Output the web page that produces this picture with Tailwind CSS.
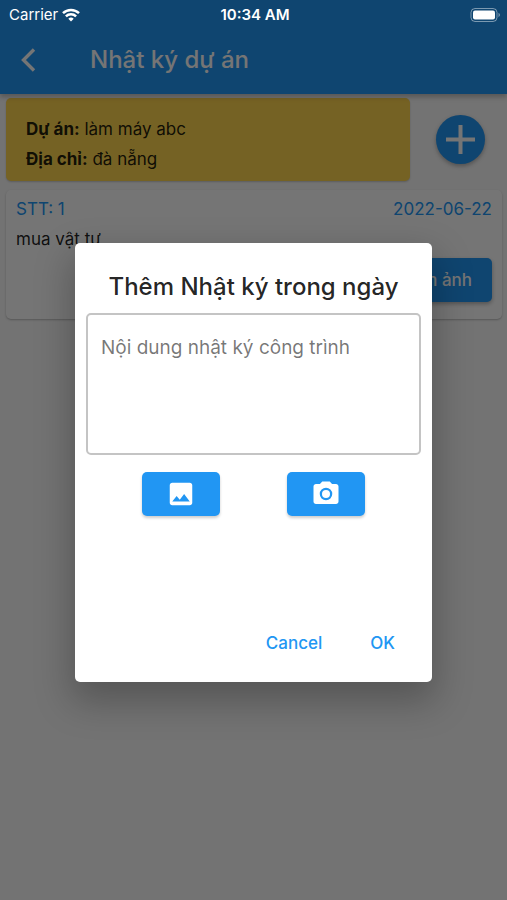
<!DOCTYPE html>
<html lang="vi">
<head>
<meta charset="utf-8">
<meta name="viewport" content="width=device-width, initial-scale=1">
<title>Nhật ký dự án</title>
<script src="https://cdn.jsdelivr.net/npm/@tailwindcss/browser@4"></script>
</head>
<body class="relative min-h-screen bg-[#fafafa] font-['Inter','Noto_Sans',sans-serif] text-[17px] leading-[30px] text-black/87">

<header class="relative bg-[#2196f3] pt-7 shadow-[0_3px_5px_rgba(0,0,0,0.25)]">
  <div class="flex h-[66px] items-center gap-12 px-4 pb-[2px] text-white">
    <button type="button" aria-label="Quay lại" class="flex size-[26px] items-center justify-center">
      <svg class="h-[26px] w-6" viewBox="0 0 24 26" fill="none" stroke="currentColor" stroke-width="3.400"><path d="M17 2.500 6.500 13 17 23.500"/></svg>
    </button>
    <h1 class="text-2xl font-medium">Nhật ký dự án</h1>
  </div>
</header>

<main class="flex flex-col gap-[9px] pt-1 pr-[5px] pl-[6px]">
  <div class="flex items-center">
    <section class="grow rounded-[5px] bg-[#ffd54f] px-5 pt-4 pb-[7px] shadow-[0_1px_2px_rgba(0,0,0,0.2)]">
      <p><b>Dự án:</b> làm máy abc</p>
      <p><b>Địa chỉ:</b> đà nẵng</p>
    </section>
    <div class="flex w-[92px] shrink-0 justify-center pl-2">
      <button type="button" aria-label="Thêm" class="flex size-[49px] items-center justify-center rounded-full bg-[#2196f3] text-white shadow-[0_2px_4px_rgba(0,0,0,0.3)]">
        <svg class="size-[29px]" viewBox="0 0 29 29" fill="none" stroke="currentColor" stroke-width="4"><path d="M14.500 0v29M0 14.500h29"/></svg>
      </button>
    </div>
  </div>
  <article class="rounded-[5px] bg-white px-[10px] pt-1 pb-[17px] shadow-[0_1px_2px_rgba(0,0,0,0.25)]">
    <div class="flex justify-between text-[#2196f3]"><span>STT: 1</span><time datetime="2022-06-22">2022-06-22</time></div>
    <p>mua vật tư</p>
    <div class="mt-1 flex justify-end">
      <button type="button" class="h-11 rounded-[5px] bg-[#2196f3] px-5 font-medium text-white shadow-[0_2px_4px_rgba(0,0,0,0.3)]">Xem ảnh</button>
    </div>
  </article>
</main>

<div class="absolute inset-0 flex items-center justify-center bg-black/54 px-[75px] pt-[25px]">
  <section role="dialog" aria-modal="true" aria-labelledby="dialog-title" class="w-full max-w-md rounded-[5px] bg-white px-[11px] pt-7 pb-4 shadow-[0_16px_36px_4px_rgba(0,0,0,0.25)]">
    <h2 id="dialog-title" class="text-center text-2xl leading-8 font-medium whitespace-nowrap">Thêm Nhật ký trong ngày</h2>
    <form>
      <textarea aria-label="Nội dung nhật ký công trình" placeholder="Nội dung nhật ký công trình" class="mt-[10px] block h-[142px] w-full resize-none rounded-[5px] border-2 border-[#c4c4c4] px-[13px] py-[18px] text-[19px] outline-none placeholder:text-black/54"></textarea>
      <div class="mt-[17px] flex justify-between px-14">
        <button type="button" aria-label="Chọn ảnh" class="flex h-11 w-[78px] items-center justify-center rounded-[5px] bg-[#2196f3] text-white shadow-[0_2px_3px_rgba(0,0,0,0.2)]">
          <svg class="size-[30px]" viewBox="0 0 24 24" fill="currentColor"><path d="M21 19V5c0-1.100-.9-2-2-2H5c-1.100 0-2 .9-2 2v14c0 1.100.9 2 2 2h14c1.100 0 2-.9 2-2zM8.500 13.500l2.500 3.010L14.500 12l4.500 6H5l3.500-4.500z"/></svg>
        </button>
        <button type="button" aria-label="Chụp ảnh" class="flex h-11 w-[78px] items-center justify-center rounded-[5px] bg-[#2196f3] text-white shadow-[0_2px_3px_rgba(0,0,0,0.2)]">
          <svg class="size-[30px]" viewBox="0 0 24 24" fill="currentColor"><path fill-rule="evenodd" d="M9 2L7.170 4H4c-1.100 0-2 .9-2 2v12c0 1.100.9 2 2 2h16c1.100 0 2-.9 2-2V6c0-1.100-.9-2-2-2h-3.170L15 2H9zm3 15a5 5 0 1 1 0-10 5 5 0 0 1 0 10z"/><circle cx="12" cy="12" r="3.200"/></svg>
        </button>
      </div>
      <div class="mt-[104px] flex justify-end gap-4 pr-[10px] font-medium text-[#2196f3]">
        <button type="button" class="h-[46px] px-4">Cancel</button>
        <button type="submit" class="h-[46px] px-4">OK</button>
      </div>
    </form>
  </section>
</div>

<div class="absolute inset-x-0 top-0 grid h-7 grid-cols-3 items-center pr-[6px] pl-[9px] text-[15px] text-white">
  <div class="flex items-center gap-1">Carrier
    <svg class="h-[14px] w-[18px]" viewBox="0 0 18 14" fill="none" stroke="currentColor" stroke-width="2.500"><path d="M1 5.200a11.400 11.400 0 0 1 16 0M3.900 8.300a7.200 7.200 0 0 1 10.200 0"/><path d="M9 13.500 6.300 10.800a3.800 3.800 0 0 1 5.400 0z" fill="currentColor" stroke="none"/></svg>
  </div>
  <time class="text-center font-semibold whitespace-nowrap">10:34 AM</time>
  <svg class="h-[14px] w-[31px] justify-self-end" viewBox="0 0 31 14" role="img" aria-label="Pin"><rect x="1" y=".5" width="26" height="13" rx="4" fill="none" stroke="#fff" stroke-opacity=".45"/><rect x="3" y="2.500" width="22" height="9" rx="2" fill="#fff"/><path d="M28.500 4.800q3 2.200 0 4.400z" fill="#fff" fill-opacity=".45"/></svg>
</div>
</body>
</html>
